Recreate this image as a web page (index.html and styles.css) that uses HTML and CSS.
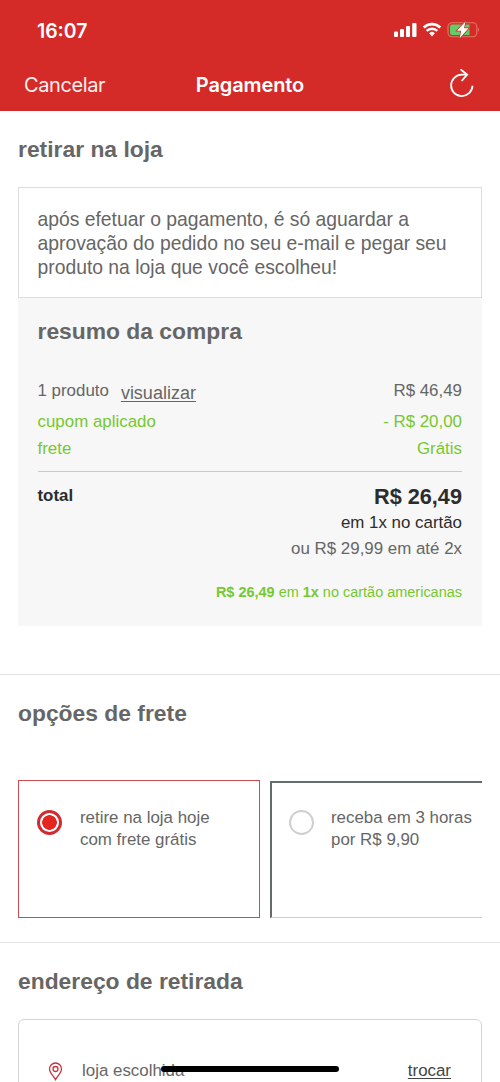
FILE: index.html
```html
<!DOCTYPE html>
<html lang="pt-BR">
<head>
<meta charset="utf-8">
<title>Pagamento</title>
<link rel="stylesheet" href="styles.css">
</head>
<body>
<div class="screen">
  <header class="header">
    <div class="status">
      <span class="clock">16:07</span>
      <svg class="indicators" width="88" height="20" viewBox="0 0 88 20">
        <g fill="#fff">
          <rect x="2" y="11.500" width="4" height="5.500" rx="1"/>
          <rect x="8" y="9" width="4" height="8" rx="1"/>
          <rect x="14" y="6" width="4" height="11" rx="1"/>
          <rect x="20.200" y="3" width="4.300" height="14" rx="1"/>
          <path d="M37.500 13.200 a3.500 3.500 0 0 1 5 0 L40 16.200z" stroke="#fff" stroke-width=".6" stroke-linejoin="round"/>
        </g>
        <g fill="none" stroke="#fff" stroke-width="2.600">
          <path d="M31.700 7.500 a11.800 11.800 0 0 1 16.600 0"/>
          <path d="M34.700 10.900 a7.500 7.500 0 0 1 10.600 0"/>
        </g>
        <rect x="56" y="2.700" width="28.800" height="14" rx="4" fill="none" stroke="#ec8d7c" stroke-opacity=".75" stroke-width="1.100"/>
        <path d="M58 6.500 q0-2 2-2 H77.500 V15 H60 q-2 0-2-2z" fill="#62cc68"/>
        <path d="M86.200 7.500 q1.600 2.200 0 4.400z" fill="#ec8d7c"/>
        <path d="M73.500 1.500 L65 10.800 H69.200 L67.700 18.300 L76.500 8.300 H72z" fill="#fff" stroke="#bd3b2a" stroke-width="1.600" paint-order="stroke"/>
      </svg>
    </div>
    <nav class="nav">
      <span class="cancel">Cancelar</span>
      <span class="nav-title">Pagamento</span>
      <svg class="reload" width="28" height="32" viewBox="0 0 28 32" fill="none" stroke="#fff" stroke-width="1.800">
        <path d="M24.500 16.800 A10.700 10.700 0 1 1 13.800 5.700 H19"/>
        <path d="M12.500 .3 L19.200 5.700 L13.600 12"/>
      </svg>
    </nav>
  </header>

  <main>
    <section class="section pickup">
      <h2 class="heading">retirar na loja</h2>
      <p class="notice">após efetuar o pagamento, é só aguardar a<br>aprovação do pedido no seu e-mail e pegar seu<br>produto na loja que você escolheu!</p>
      <div class="summary">
        <h2 class="heading">resumo da compra</h2>
        <div class="row products"><span class="count">1 produto <a class="view">visualizar</a></span><span>R$ 46,49</span></div>
        <div class="row green coupon"><span>cupom aplicado</span><span>- R$ 20,00</span></div>
        <div class="row green freight"><span>frete</span><span>Grátis</span></div>
        <div class="row total"><b>total</b><b class="price">R$ 26,49</b></div>
        <p class="installment dark">em 1x no cartão</p>
        <p class="installment">ou R$ 29,99 em até 2x</p>
        <p class="offer"><b>R$ 26,49</b> em <b>1x</b> no cartão americanas</p>
      </div>
    </section>

    <section class="section shipping">
      <h2 class="heading">opções de frete</h2>
      <div class="options">
        <div class="option selected"><i class="radio"></i><p>retire na loja hoje<br>com frete grátis</p></div>
        <div class="option"><i class="radio"></i><p>receba em 3 horas<br>por R$ 9,90</p></div>
      </div>
    </section>

    <section class="section address">
      <h2 class="heading">endereço de retirada</h2>
      <div class="store">
        <svg class="pin" width="15" height="19" viewBox="0 0 15 19" fill="none" stroke="#c9343b" stroke-width="1.300">
          <path d="M7.500 17.600 C5.800 14.400 1.500 10.800 1.500 7 a6 6 0 0 1 12 0 C13.500 10.800 9.200 14.400 7.500 17.600z"/>
          <circle cx="7.500" cy="7" r="2.500"/>
        </svg>
        <span>loja escolhida</span>
        <a class="change">trocar</a>
      </div>
    </section>
  </main>
  <div class="home-bar"></div>
</div>
</body>
</html>
```
FILE: styles.css
```css
* { box-sizing: border-box; }
body { margin: 0; background: #fff; }
h2, p { margin: 0; }

.screen {
  position: relative;
  width: 500px;
  height: 1082px;
  overflow: hidden;
  font-family: "Liberation Sans", Arial, sans-serif;
  font-size: 16.9px;
  line-height: 22px;
  color: #666;
}

/* Header */
.header {
  height: 111px;
  background: #d52b28;
  color: #fff;
  font-family: Inter, sans-serif;
}
.status {
  display: flex;
  align-items: center;
  justify-content: space-between;
  height: 60px;
  padding: 0 20px 0 37px;
}
.clock { padding-top: 1px; font-size: 19.4px; font-weight: 600; }
.nav {
  display: grid;
  grid-template-columns: 1fr auto 1fr;
  align-items: center;
  height: 50px;
  padding: 0 24px;
  font-size: 20px;
}
.cancel { letter-spacing: -.4px; color: #fff0ee; }
.nav-title { font-weight: 600; letter-spacing: -.1px; }
.reload { justify-self: end; }

/* Sections */
.section { padding: 0 18px; }
.heading { font-size: 22.85px; line-height: 28px; font-weight: 700; }
.pickup { height: 563px; padding-top: 24px; }
.notice {
  height: 111px;
  margin-top: 24px;
  padding: 19.500px 18px 0 18.5px;
  border: 1px solid #ddd;
  font-size: 19.32px;
  line-height: 24.2px;
  white-space: nowrap;
}

/* Purchase summary */
.summary {
  height: 328px;
  padding: 19px 20px 0 19.5px;
  background: #f7f7f7;
}
.row { display: flex; justify-content: space-between; height: 22px; }
.products { margin-top: 35px; }
.count { display: flex; gap: 12px; }
.view {
  margin-top: 2px;
  font-size: 18px;
  text-decoration: underline;
  text-underline-offset: 2px;
}
.green, .offer { color: #76c82f; }
.coupon { margin-top: 9px; }
.freight { margin-top: 5px; border-bottom: 1px solid #c9c9c9; height: 34px; }
.total { margin-top: 13px; color: #2c2c2c; }
.price { margin-top: 1px; font-size: 21.7px; }
.installment { text-align: right; line-height: 27px; }
.total + .installment { margin-top: 2px; }
.dark { color: #2c2c2c; }
.installment + .installment { line-height: 26px; }
.offer { margin-top: 19px; font-size: 14.48px; text-align: right; }

/* Shipping options */
.shipping, .address { border-top: 1px solid #e3e3e3; }
.shipping { height: 268px; padding-top: 24px; }
.options {
  display: flex;
  gap: 10px;
  margin-top: 53px;
  overflow: hidden;
}
.option {
  display: flex;
  flex: none;
  width: 242px;
  height: 138px;
  padding: 25px 0 0 17px;
  gap: 17px;
  border: 2px solid #666b6e;
  border-bottom: 1px solid #cfcfcf;
}
.option p { margin-top: 1px; line-height: 21.7px; }
.option:not(.selected) { height: 137px; margin-top: 1px; padding-top: 23px; }
.option.selected { gap: 18px; border: 1.5px solid #cc4b51; padding: 25px 0 0 18px; }
.radio {
  width: 25px;
  height: 25px;
  margin-top: 4px;
  border: 2px solid #cfcfcf;
  border-radius: 50%;
}
.selected .radio {
  border: 3px solid #cf2c32;
  background: radial-gradient(circle, #e3261f 7px, #fff 7.6px);
}

/* Pickup address */
.address { padding-top: 24px; }
.store {
  display: flex;
  height: 90px;
  margin-top: 24px;
  padding: 40px 30px 0 29px;
  border: 1.5px solid #d5d5d5;
  border-radius: 6px;
}
.pin { margin: 2px 19px 0 0; }
.change { margin-left: auto; color: #444; text-decoration: underline; text-underline-offset: 2px; }

.home-bar {
  position: absolute;
  left: 161px;
  top: 1066px;
  width: 178px;
  height: 6px;
  border-radius: 3px;
  background: #000;
}
```
